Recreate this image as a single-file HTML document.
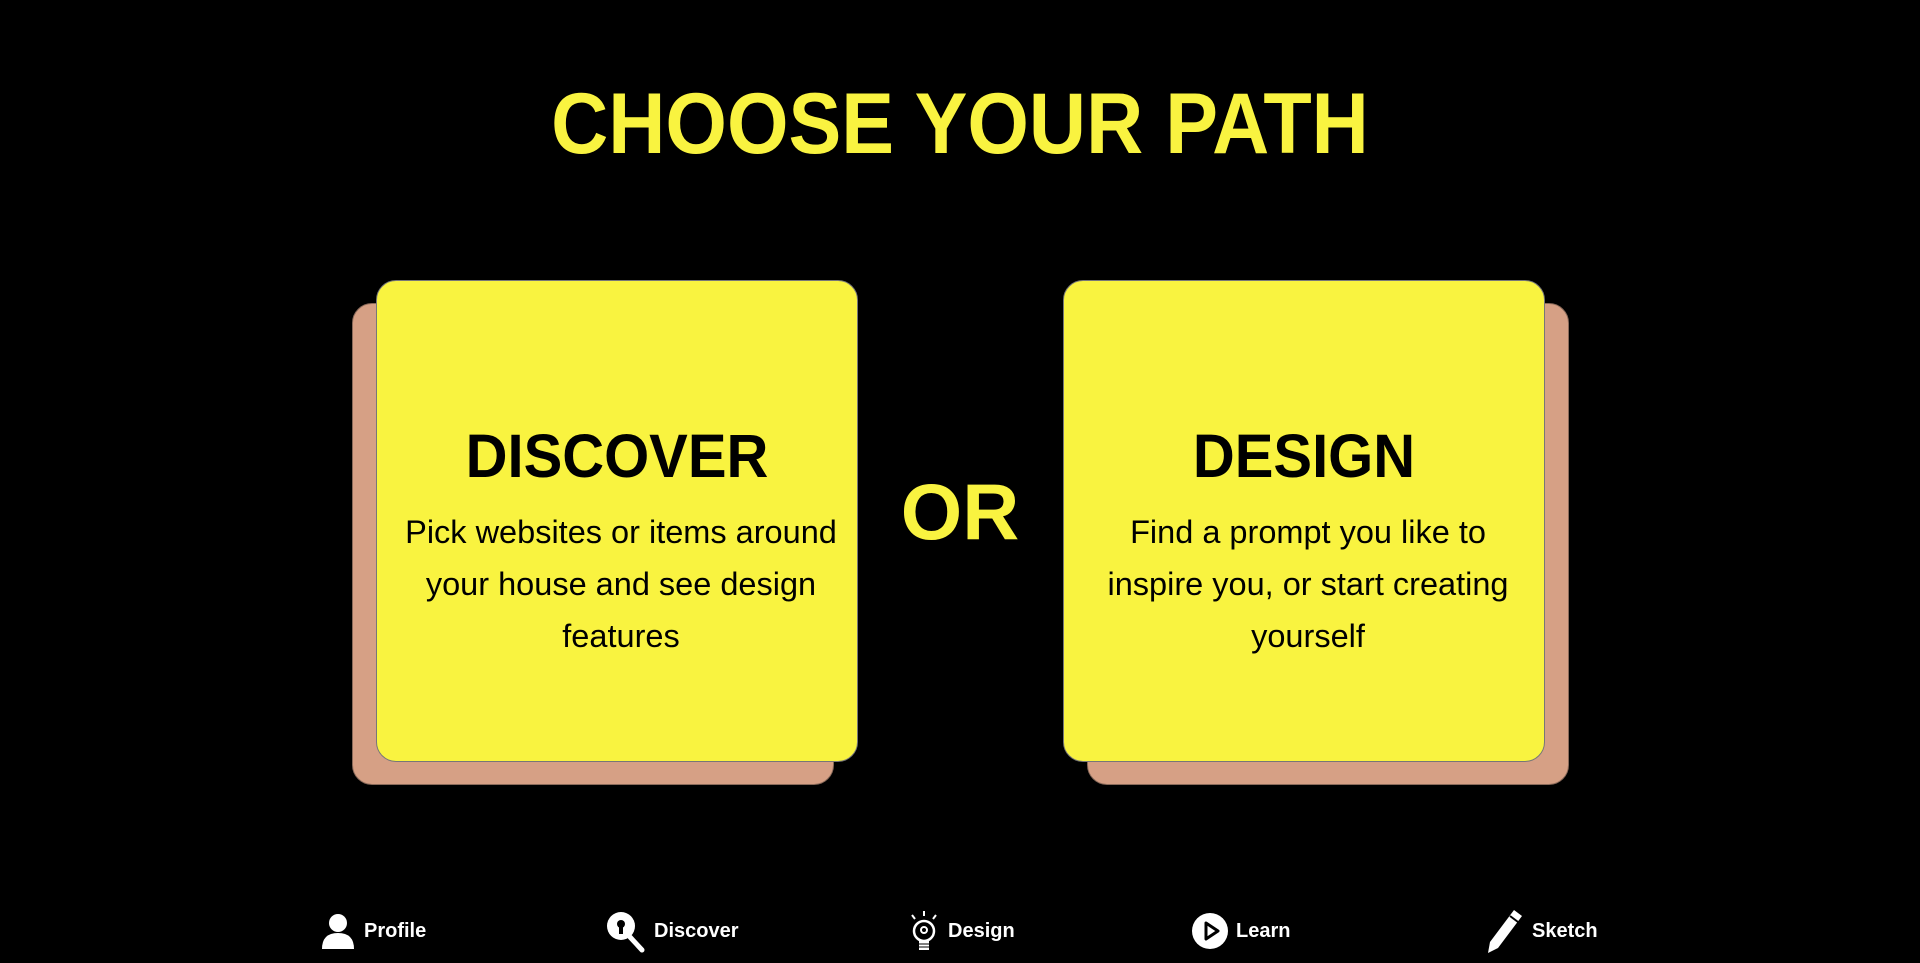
<!DOCTYPE html>
<html><head><style>
html,body{margin:0;padding:0;background:#000;width:1920px;height:963px;overflow:hidden;font-family:"Liberation Sans",sans-serif}
h1{position:absolute;left:0;width:1920px;top:74px;margin:0;text-align:center;color:#f9f340;font-size:86px;font-weight:bold;line-height:100px;transform:scaleX(0.92)}
.sh{position:absolute;background:#d6a085;border-radius:20px;width:482px;height:482px;border:1px solid #8a6a5a;box-sizing:border-box}
.card{position:absolute;background:#f9f340;border-radius:20px;width:482px;height:482px;border:1px solid #777;box-sizing:border-box;text-align:center}
.card h2{margin:0;position:absolute;top:135px;width:100%;font-size:61px;line-height:80px;font-weight:bold;color:#000;transform:scaleX(0.95)}
.card p{margin:0;position:absolute;top:225px;left:22px;right:14px;font-size:32.5px;line-height:52px;color:#000}
.or{position:absolute;left:0;width:1920px;top:462px;text-align:center;color:#f9f340;font-size:79px;font-weight:bold;line-height:100px}
.nav{position:absolute;top:910px;height:42px;display:flex;align-items:center;color:#fff;font-weight:bold;font-size:20px}
.nav svg{margin-right:6px}
</style></head><body>
<h1>CHOOSE YOUR PATH</h1>
<div class="sh" style="left:352px;top:303px"></div>
<div class="card" style="left:376px;top:280px"><h2>DISCOVER</h2><p>Pick websites or items around your house and see design features</p></div>
<div class="sh" style="left:1087px;top:303px"></div>
<div class="card" style="left:1063px;top:280px"><h2>DESIGN</h2><p>Find a prompt you like to inspire you, or start creating yourself</p></div>
<div class="or">OR</div>

<div class="nav" style="left:318px"><svg width="40" height="40" viewBox="0 0 40 40"><circle cx="20" cy="12" r="9" fill="#fff"/><path d="M4 38 Q4 22 20 22 Q36 22 36 38 Z" fill="#fff"/></svg>Profile</div>
<div class="nav" style="left:604px"><svg width="44" height="44" viewBox="0 0 44 44"><circle cx="17" cy="17" r="14" fill="#fff"/><circle cx="17" cy="15" r="4" fill="#000"/><rect x="15" y="17" width="4" height="8" fill="#000"/><path d="M26 28 L38 41" stroke="#fff" stroke-width="5" stroke-linecap="round"/></svg>Discover</div>
<div class="nav" style="left:906px"><svg width="36" height="44" viewBox="0 0 36 44"><path d="M18 2v5M6 6l3 4M30 6l-3 4" stroke="#fff" stroke-width="2"/><circle cx="18" cy="22" r="10" fill="none" stroke="#fff" stroke-width="2.5"/><circle cx="18" cy="21" r="3" fill="none" stroke="#fff" stroke-width="2"/><rect x="13" y="32" width="10" height="9" fill="#fff"/><path d="M13 35h10M13 38h10" stroke="#000" stroke-width="1"/></svg>Design</div>
<div class="nav" style="left:1190px"><svg width="40" height="40" viewBox="0 0 40 40"><circle cx="20" cy="20" r="18" fill="#fff"/><path d="M16 12 L28 20 L16 28 Z" fill="none" stroke="#000" stroke-width="3" stroke-linejoin="round"/></svg>Learn</div>
<div class="nav" style="left:1484px"><svg width="42" height="46" viewBox="0 0 42 46"><path d="M30 2 L38 8 L14 40 L4 45 L6 34 Z" fill="#fff"/><path d="M26 8 L34 14" stroke="#000" stroke-width="2"/></svg>Sketch</div>
</body></html>
